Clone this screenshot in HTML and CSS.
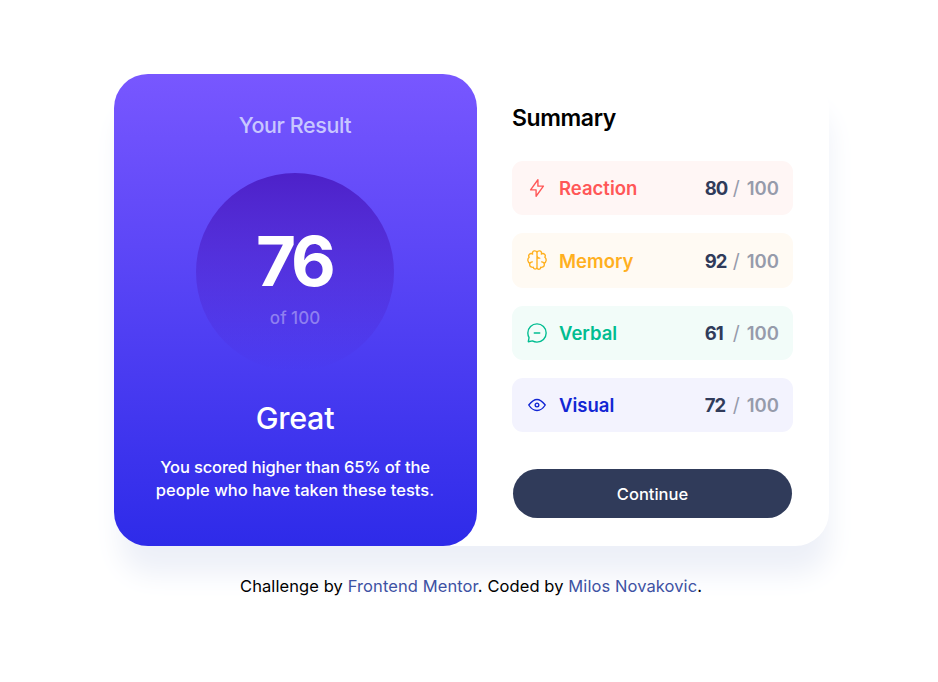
FILE: index.html
```html
<!DOCTYPE html>
<html lang="en">
<head>
<meta charset="utf-8">
<title>Results summary</title>
<link rel="stylesheet" href="styles.css">
</head>
<body>
<main class="card">
  <section class="result">
    <h1 class="result-title">Your Result</h1>
    <div class="circle">
      <span class="score">76</span>
      <span class="of">of 100</span>
    </div>
    <h2 class="grade">Great</h2>
    <p class="text"><span class="line-a">You scored higher than 65% of the</span><br><span class="line-b">people who have taken these tests.</span></p>
  </section>
  <section class="summary">
    <h2 class="summary-title">Summary</h2>
    <ul class="list">
      <li class="item reaction">
        <svg class="icon" viewBox="0 0 20 20"><path d="M10.833 8.333V2.5l-6.666 9.167h5V17.5l6.666-9.167h-5Z"/></svg>
        <span class="name">Reaction</span>
        <span class="points"><b>80</b><i>/</i><span>100</span></span>
      </li>
      <li class="item memory">
        <svg class="icon" viewBox="0 0 20 20"><path d="M5.833 11.667a2.5 2.5 0 1 0 .834 4.858M3.553 13.004a3.333 3.333 0 0 1-.728-5.53m.025-.067a2.083 2.083 0 0 1 2.983-2.824m.199.054A2.083 2.083 0 1 1 10 3.75v12.917a1.667 1.667 0 0 1-3.333 0M10 5.833a2.5 2.5 0 0 0 2.5 2.5m1.667 3.334a2.5 2.5 0 1 1-.834 4.858m3.114-3.521a3.333 3.333 0 0 0 .728-5.53m-.025-.067a2.083 2.083 0 0 0-2.983-2.824M10 3.75a2.083 2.083 0 1 1 3.967.887M10 16.667a1.667 1.667 0 1 0 3.333 0"/></svg>
        <span class="name">Memory</span>
        <span class="points"><b>92</b><i>/</i><span>100</span></span>
      </li>
      <li class="item verbal">
        <svg class="icon" viewBox="0 0 20 20"><path d="M7.5 10h5M10 18.333A8.333 8.333 0 1 0 1.667 10c0 1.518.406 2.942 1.115 4.167l-.699 3.75 3.75-.699A8.295 8.295 0 0 0 10 18.333Z"/></svg>
        <span class="name">Verbal</span>
        <span class="points"><b>61</b><i>/</i><span>100</span></span>
      </li>
      <li class="item visual">
        <svg class="icon" viewBox="0 0 20 20"><path d="M10 11.667a1.667 1.667 0 1 0 0-3.334 1.667 1.667 0 0 0 0 3.334Z"/><path d="M17.5 10c-1.574 2.492-4.402 5-7.5 5s-5.926-2.508-7.5-5C4.416 7.632 6.66 5 10 5s5.584 2.632 7.5 5Z"/></svg>
        <span class="name">Visual</span>
        <span class="points"><b>72</b><i>/</i><span>100</span></span>
      </li>
    </ul>
    <button class="button" type="button">Continue</button>
  </section>
</main>
<footer class="footer">Challenge by <a>Frontend Mentor</a>. Coded by <a>Milos Novakovic</a>.</footer>
</body>
</html>
```
FILE: styles.css
```css
* { box-sizing: border-box; margin: 0; padding: 0; }
body {
  background: #fff;
  color: #000;
  font-family: Inter, "Liberation Sans", sans-serif;
  padding-top: 74px;
}
.card {
  width: 715px;
  height: 472px;
  margin-left: 114px;
  display: flex;
  border-radius: 34px;
  background: #fff;
  box-shadow: 3px 31px 28px -3px hsl(224, 45%, 95%);
}
.result {
  width: 363px;
  padding: 37px 1px 0 0;
  display: flex;
  flex-direction: column;
  align-items: center;
  border-radius: 34px;
  background: linear-gradient(#7857ff, #2e2be9);
  color: #fff;
  text-align: center;
}
.result-title {
  font-size: 21.5px;
  line-height: 28px;
  font-weight: 500;
  letter-spacing: -.4px;
  color: #c8c7ff;
}
.circle {
  width: 198px;
  height: 198px;
  margin-top: 34px;
  padding-top: 48px;
  display: flex;
  flex-direction: column;
  align-items: center;
  border-radius: 50%;
  background: linear-gradient(#4d21c9, rgba(37, 33, 201, 0));
}
.score {
  padding-right: 2px;
  font-size: 69px;
  line-height: 80px;
  font-weight: 700;
  letter-spacing: -4px;
}
.of {
  margin-top: 6px;
  font-size: 17px;
  line-height: 22px;
  font-weight: 500;
  letter-spacing: 0;
  color: #8f7ff0;
}
.grade {
  margin-top: 27px;
  font-size: 30.5px;
  line-height: 40px;
  font-weight: 500;
  letter-spacing: -.3px;
}
.text {
  margin-top: 18px;
  font-size: 16.5px;
  line-height: 23px;
  font-weight: 500;
  white-space: nowrap;
}
.line-a { letter-spacing: -.14px; }
.line-b { letter-spacing: .01px; }
.summary {
  width: 352px;
  padding: 28px 36px 28px 35px;
  display: flex;
  flex-direction: column;
}
.summary-title {
  font-size: 23px;
  line-height: 32px;
  font-weight: 600;
  letter-spacing: -.4px;
}
.list {
  margin-top: 27px;
  display: grid;
  gap: 18px;
  list-style: none;
}
.item {
  height: 54.3px;
  padding: 0 14px 0 14px;
  display: flex;
  align-items: center;
  border-radius: 11px;
  font-size: 18.5px;
  font-weight: 600;
}
.icon {
  width: 22px;
  height: 22px;
  overflow: visible;
  fill: none;
  stroke: currentColor;
  stroke-width: 1.25;
  stroke-linecap: round;
  stroke-linejoin: round;
}
.name {
  margin-left: 11px;
}
.points {
  margin-left: auto;
  display: flex;
  line-height: 23px;
  color: #969bab;
}
.points b { width: 28px; color: #303b5a; font-weight: 700; letter-spacing: -1px; }
.points i { width: 14px; font-size: 19.5px; font-style: normal; font-weight: 400; }
.points span { letter-spacing: 0; }
.reaction { background: #fff6f5; color: #ff5757; }
.memory { background: #fffaf3; color: #ffb01f; }
.memory .name { padding-top: 1px; }
.memory .points, .verbal .points { padding-top: 2px; }
.verbal { background: #f2fcf9; color: #00bd91; }
.visual { background: #f3f3fe; color: #1125d4; }
.button {
  height: 49px;
  margin: 37px 1px 0;
  border: 0;
  border-radius: 25px;
  background: #303b5a;
  color: #fff;
  font-family: inherit;
  font-size: 16.5px;
  font-weight: 500;
  letter-spacing: 0;
}
.footer {
  margin: 28px 0 0 240px;
  font-size: 16.5px;
  line-height: 24px;
  letter-spacing: .09px;
  white-space: nowrap;
}
.footer a { color: #3e52a3; }
```
